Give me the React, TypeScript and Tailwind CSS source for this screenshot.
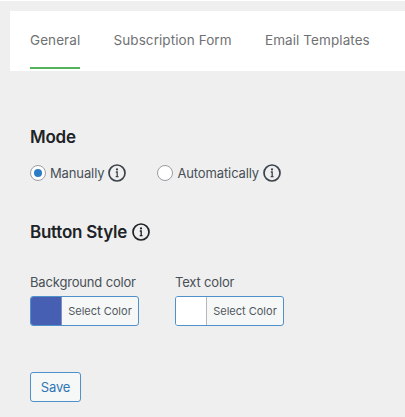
import React from "react";

function InfoIcon({ className }: { className: string }) {
  return (
    <svg viewBox="0 0 18 18" className={`h-[18px] w-[18px] shrink-0 ${className}`} fill="none" stroke="currentColor">
      <circle cx="9" cy="9" r="8" strokeWidth="1.7" />
      <circle cx="9" cy="5.4" r="1.1" fill="currentColor" stroke="none" />
      <path d="M7.8 8h1.4v4.6M7.7 12.6h2.8" strokeWidth="1.3" />
    </svg>
  );
}

function Radio({ label, checked }: { label: string; checked?: boolean }) {
  return (
    <label className="flex items-center">
      <span className="flex h-4 w-4 items-center justify-center rounded-full border border-[#9a9da1] bg-white">
        {checked && <span className="h-2 w-2 rounded-full bg-[#2b7cc4]" />}
      </span>
      <span className="ml-1 text-[13px] leading-[18px] tracking-[-0.12px]">{label}</span>
      <InfoIcon className="ml-1 text-[#3c434a]" />
    </label>
  );
}

function ColorField({ label, swatch, divider }: { label: string; swatch: string; divider: string }) {
  return (
    <div>
      <div className="text-[13px] leading-[18px] tracking-[-0.17px]">{label}</div>
      <button className="mt-[5px] flex h-[30px] w-[109px] overflow-hidden rounded-[3px] border border-[#4f91cb] bg-[#f6f7f7]">
        <span className={`h-full w-[30px] shrink-0 ${swatch}`} />
        <span className={`h-full flex-1 border-l text-center text-[11px] leading-[29px] whitespace-nowrap text-[#50575e] ${divider}`}>
          Select Color
        </span>
      </button>
    </div>
  );
}

export default function App() {
  return (
    <div className="h-[417px] w-[405px] overflow-hidden border-t border-white bg-[#efefef] font-['Inter',sans-serif] text-[#484f56]">
      <nav className="mt-[10px] ml-[10px] flex h-[60px] bg-white pl-5 text-[13.5px] leading-[18px] tracking-[0.08px] whitespace-nowrap text-[#707173]">
        <div className="relative w-[50px] pt-5">
          General
          <span className="absolute bottom-[2px] left-0 h-[2px] w-full bg-[#55b45b]" />
        </div>
        <div className="ml-[33.5px] w-[118.5px] pt-5">Subscription Form</div>
        <div className="ml-[33px] pt-5">Email Templates</div>
      </nav>
      <main className="pl-[30px]">
        <h2 className="mt-[55px] text-[17px] leading-[22px] font-semibold tracking-[-0.25px] text-[#1d2327]">Mode</h2>
        <div className="mt-4 flex">
          <Radio label="Manually" checked />
          <div className="ml-[31px]">
            <Radio label="Automatically" />
          </div>
        </div>
        <h2 className="mt-[39px] flex items-center text-[17px] leading-[22px] font-semibold tracking-[-0.25px] text-[#1d2327]">
          Button Style
          <InfoIcon className="ml-[5px]" />
        </h2>
        <div className="mt-[30px] flex gap-9">
          <ColorField label="Background color" swatch="bg-[#465fb3]" divider="border-[#7f8fc4]" />
          <ColorField label="Text color" swatch="bg-white" divider="border-[#b4b8bc]" />
        </div>
        <button className="mt-[46px] block h-[30px] w-[51px] rounded-[3px] border border-[#4f91cb] bg-[#f6f7f7] text-[13px] leading-[29px] tracking-[-0.1px] text-[#2f76b5]">
          Save
        </button>
      </main>
    </div>
  );
}
